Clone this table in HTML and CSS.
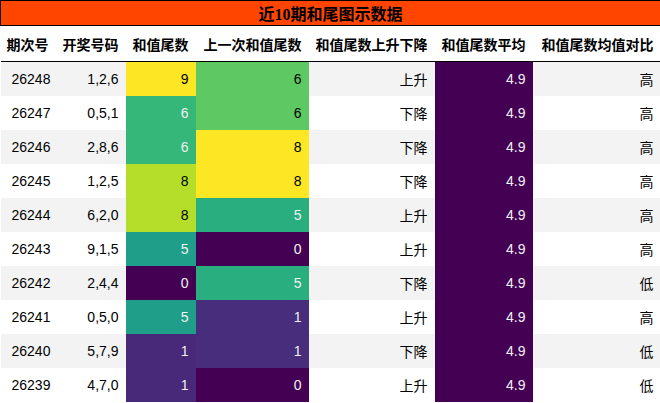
FILE: index.html
```html
<!DOCTYPE html>
<html>
<head>
<meta charset="utf-8">
<link rel="stylesheet" href="styles.css">
</head>
<body>
<table class="tbl">
  <colgroup>
    <col class="c1"><col class="c2"><col class="c3"><col class="c4"><col class="c5"><col class="c6"><col class="c7">
  </colgroup>
  <thead>
    <tr><th colspan="7" class="title">近10期和尾图示数据</th></tr>
    <tr class="hdr">
      <th>期次号</th><th>开奖号码</th><th>和值尾数</th><th>上一次和值尾数</th><th>和值尾数上升下降</th><th>和值尾数平均</th><th>和值尾数均值对比</th>
    </tr>
  </thead>
  <tbody>
    <tr><td>26248</td><td>1,2,6</td><td class="v9 dk">9</td><td class="w6 dk">6</td><td>上升</td><td class="avg">4.9</td><td>高</td></tr>
    <tr><td>26247</td><td>0,5,1</td><td class="v6 lt">6</td><td class="w6 dk">6</td><td>下降</td><td class="avg">4.9</td><td>高</td></tr>
    <tr><td>26246</td><td>2,8,6</td><td class="v6 lt">6</td><td class="w8 dk">8</td><td>下降</td><td class="avg">4.9</td><td>高</td></tr>
    <tr><td>26245</td><td>1,2,5</td><td class="v8 dk">8</td><td class="w8 dk">8</td><td>下降</td><td class="avg">4.9</td><td>高</td></tr>
    <tr><td>26244</td><td>6,2,0</td><td class="v8 dk">8</td><td class="w5 lt">5</td><td>上升</td><td class="avg">4.9</td><td>高</td></tr>
    <tr><td>26243</td><td>9,1,5</td><td class="v5 lt">5</td><td class="w0 lt">0</td><td>上升</td><td class="avg">4.9</td><td>高</td></tr>
    <tr><td>26242</td><td>2,4,4</td><td class="v0 lt">0</td><td class="w5 lt">5</td><td>下降</td><td class="avg">4.9</td><td>低</td></tr>
    <tr><td>26241</td><td>0,5,0</td><td class="v5 lt">5</td><td class="w1 lt">1</td><td>上升</td><td class="avg">4.9</td><td>高</td></tr>
    <tr><td>26240</td><td>5,7,9</td><td class="v1 lt">1</td><td class="w1 lt">1</td><td>下降</td><td class="avg">4.9</td><td>低</td></tr>
    <tr><td>26239</td><td>4,7,0</td><td class="v1 lt">1</td><td class="w0 lt">0</td><td>上升</td><td class="avg">4.9</td><td>低</td></tr>
  </tbody>
</table>
</body>
</html>
```
FILE: styles.css
```css
html, body {
  margin: 0;
  padding: 0;
  background: #ffffff;
}
.tbl {
  border-collapse: collapse;
  table-layout: fixed;
  width: 660px;
  font-family: "Liberation Sans", "Noto Sans CJK SC", sans-serif;
  font-size: 14px;
  color: #000;
}
.c1 { width: 55px; }
.c2 { width: 70px; }
.c3 { width: 70px; }
.c4 { width: 113px; }
.c5 { width: 126px; }
.c6 { width: 98px; }
.c7 { width: 128px; }
.title {
  height: 24px;
  padding: 0;
  background: #ff4500;
  border: 1px solid #000;
  font-family: "Liberation Serif", "Noto Sans CJK SC", serif;
  font-size: 16px;
  font-weight: bold;
  text-align: center;
  color: #000;
}
.hdr th {
  height: 35px;
  padding: 0 7px 0 0;
  text-align: right;
  font-weight: bold;
  font-size: 14px;
  border-bottom: 1px solid #000;
  white-space: nowrap;
}
tbody td {
  height: 34px;
  padding: 0 7px 0 0;
  text-align: right;
  white-space: nowrap;
}
tbody tr:nth-child(odd) { background: #f3f3f3; }
tbody tr:nth-child(even) { background: #ffffff; }
tbody td:first-child { text-align: left; padding-left: 11px; }
.dk { color: #000000; }
.lt { color: #f1f1f1; }
.v9 { background: #fde725; }
.v8 { background: #b5de2b; }
.v6 { background: #35b779; }
.v5 { background: #1f9e89; }
.v1 { background: #482878; }
.v0 { background: #440154; }
.w8 { background: #fde725; }
.w6 { background: #5ec962; }
.w5 { background: #29af7f; }
.w1 { background: #472d7b; }
.w0 { background: #440154; }
.avg { background: #440154; color: #f1f1f1; }
```
